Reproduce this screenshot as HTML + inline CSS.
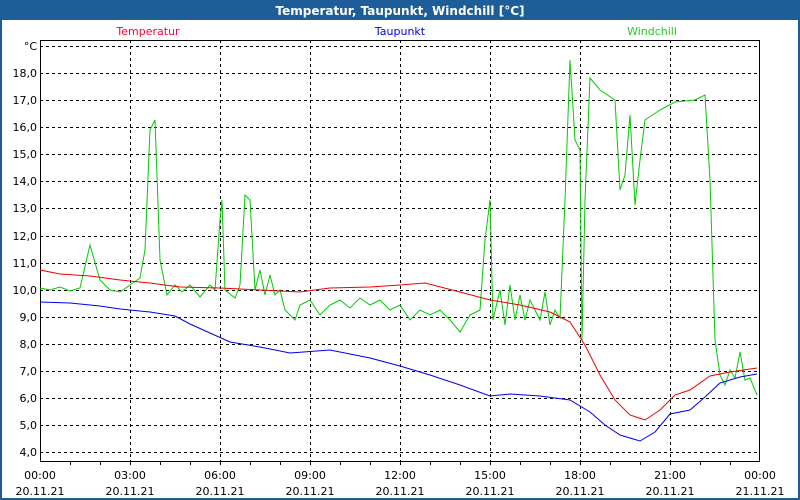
<!DOCTYPE html>
<html><head><meta charset="utf-8"><style>
html,body{margin:0;padding:0;width:800px;height:500px;overflow:hidden;background:#fff}
svg{display:block}
text{font-family:"DejaVu Sans","Liberation Sans",sans-serif;font-size:11px}
</style></head><body>
<svg width="800" height="500" xmlns="http://www.w3.org/2000/svg">
<rect x="0" y="0" width="800" height="500" fill="#1d5e98"/>
<rect x="2" y="20" width="796" height="478" fill="#fff"/>
<text x="400" y="15" text-anchor="middle" fill="#fff" font-weight="bold" style="font-size:12px">Temperatur, Taupunkt, Windchill [°C]</text>
<text x="148" y="35" text-anchor="middle" fill="#ff0033">Temperatur</text>
<text x="400" y="35" text-anchor="middle" fill="#0000ee">Taupunkt</text>
<text x="652" y="35" text-anchor="middle" fill="#22cc22">Windchill</text>
<g stroke="#000" stroke-width="1" stroke-dasharray="3,3" fill="none">
<path d="M40 46.5H760M40 73.5H760M40 100.5H760M40 127.5H760M40 154.5H760M40 181.5H760M40 208.5H760M40 236.5H760M40 263.5H760M40 290.5H760M40 317.5H760M40 344.5H760M40 371.5H760M40 398.5H760M40 425.5H760M40 452.5H760"/>
<path d="M130.5 40V461M220.5 40V461M310.5 40V461M400.5 40V461M490.5 40V461M580.5 40V461M670.5 40V461"/>
</g>
<rect x="40.5" y="40.5" width="719" height="421" fill="none" stroke="#000"/>
<path d="M70.5 461v4M100.5 461v4M130.5 461v4M160.5 461v4M190.5 461v4M220.5 461v4M250.5 461v4M280.5 461v4M310.5 461v4M340.5 461v4M370.5 461v4M400.5 461v4M430.5 461v4M460.5 461v4M490.5 461v4M520.5 461v4M550.5 461v4M580.5 461v4M610.5 461v4M640.5 461v4M670.5 461v4M700.5 461v4M730.5 461v4" stroke="#000"/>
<g fill="#000" text-anchor="end">
<text x="37" y="50">°C</text><text x="37" y="77">18,0</text><text x="37" y="104">17,0</text><text x="37" y="131">16,0</text><text x="37" y="158">15,0</text><text x="37" y="185">14,0</text><text x="37" y="212">13,0</text><text x="37" y="240">12,0</text><text x="37" y="267">11,0</text><text x="37" y="294">10,0</text><text x="37" y="321">9,0</text><text x="37" y="348">8,0</text><text x="37" y="375">7,0</text><text x="37" y="402">6,0</text><text x="37" y="429">5,0</text><text x="37" y="456">4,0</text>
</g>
<g fill="#000" text-anchor="middle">
<text x="40" y="479">00:00</text><text x="40" y="495">20.11.21</text>
<text x="130" y="479">03:00</text><text x="130" y="495">20.11.21</text>
<text x="220" y="479">06:00</text><text x="220" y="495">20.11.21</text>
<text x="310" y="479">09:00</text><text x="310" y="495">20.11.21</text>
<text x="400" y="479">12:00</text><text x="400" y="495">20.11.21</text>
<text x="490" y="479">15:00</text><text x="490" y="495">20.11.21</text>
<text x="580" y="479">18:00</text><text x="580" y="495">20.11.21</text>
<text x="670" y="479">21:00</text><text x="670" y="495">20.11.21</text>
<text x="760" y="479">00:00</text><text x="760" y="495">21.11.21</text>
</g>
<g fill="none" stroke-width="1">
<polyline stroke="#00cc00" points="40,288 50,290 60,287 70,291 80,288 90,245 100,280 110,290 120,292 130,285 140,278 145,250 150,130 155,120 160,260 167,295 175,285 182,292 190,285 200,297 210,285 215,290 220,220 222,200 225,290 235,298 240,285 245,195 250,200 255,290 260,270 265,295 270,275 275,295 280,290 285,310 295,320 300,305 310,300 320,315 330,305 340,300 350,308 360,298 370,305 380,300 390,310 400,305 410,320 420,310 430,315 440,310 450,320 460,332 470,315 480,310 485,240 490,200 493,320 500,290 505,325 510,285 515,320 520,295 525,320 530,300 540,320 545,292 550,325 555,310 560,318 565,200 570,60 575,140 580,150 582,340 585,200 590,78 600,90 615,100 620,190 625,175 630,115 635,205 640,160 645,120 660,110 675,102 695,100 705,95 710,180 715,340 720,375 725,385 730,370 735,378 740,352 745,380 750,378 757,395"/>
<polyline stroke="#ee0000" points="40,270 60,274 90,276 120,280 150,283 180,287 220,288 260,290 300,292 330,288 370,287 400,285 425,283 460,292 490,300 520,305 550,312 570,322 585,345 600,375 615,400 630,415 645,420 660,410 675,395 690,390 710,376 730,372 757,368"/>
<polyline stroke="#0000ee" points="40,302 70,303 100,306 120,309 150,312 175,316 190,324 210,333 230,342 260,347 290,353 330,350 370,358 400,366 430,375 460,385 490,396 510,394 540,396 570,400 590,412 605,425 620,435 640,441 655,432 670,414 690,410 705,397 720,383 740,377 757,374"/>
</g>
</svg>
</body></html>
